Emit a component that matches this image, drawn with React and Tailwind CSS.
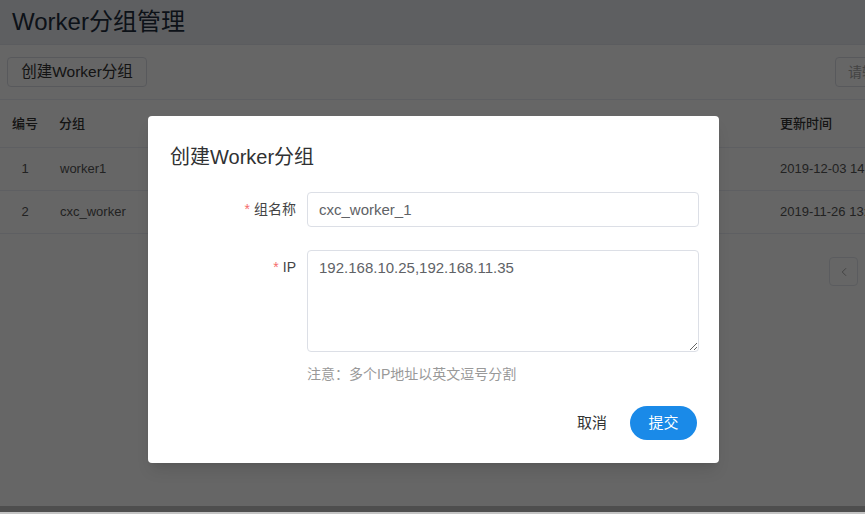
import { ChevronLeft } from 'lucide-react';

const rows = [
  { id: 1, name: 'worker1', time: '2019-12-03 14:21:35' },
  { id: 2, name: 'cxc_worker', time: '2019-11-26 13:40:12' },
];

function Page() {
  return (
    <div className="flex flex-col">
      {/* Seitenkopf */}
      <header className="h-[45px] bg-[#eceef3] border-b border-[#e4e7ed] px-3 flex items-center">
        <h1 className="text-[24px] leading-none text-[#1f2d3d]">Worker分组管理</h1>
      </header>

      {/* Werkzeugleiste */}
      <div className="h-[55px] bg-white border-b border-[#ebeef5] flex items-center justify-between pl-[7px]">
        <button className="h-[30px] w-[140px] rounded border border-[#dcdfe6] bg-white text-[15.5px] text-[#333]">
          创建Worker分组
        </button>
        <input
          readOnly
          placeholder="请输入分组名称"
          className="h-[30px] w-[200px] mr-[-170px] rounded border border-[#dcdfe6] px-3 text-[14px] placeholder:text-[#aaa]"
        />
      </div>

      {/* Tabelle */}
      <div className="bg-white">
        <div className="h-[48px] flex items-center border-b border-[#ebeef5] text-[13px] font-medium text-[#333]">
          <div className="w-[50px] shrink-0 text-center">编号</div>
          <div className="w-[721px] shrink-0 pl-[9px]">分组</div>
          <div className="shrink-0 pl-[9px]">更新时间</div>
        </div>
        {rows.map((r) => (
          <div key={r.id} className="h-[43px] flex items-center border-b border-[#ebeef5] text-[13px] text-[#555]">
            <div className="w-[50px] shrink-0 text-center">{r.id}</div>
            <div className="w-[721px] shrink-0 pl-[10px]">{r.name}</div>
            <div className="shrink-0 pl-[9px] whitespace-nowrap">{r.time}</div>
          </div>
        ))}
        <div className="flex justify-end pr-[7px] pt-[23px] pb-[220px]">
          <button className="w-[29px] h-[29px] border border-[#e4e7ed] rounded-sm flex items-center justify-center text-[#999]">
            <ChevronLeft size={14} strokeWidth={1.5} />
          </button>
        </div>
      </div>
    </div>
  );
}

export default function App() {
  return (
    <div className="relative h-[514px] w-[865px] overflow-hidden bg-[#c4c4c4] font-['Liberation_Sans','Noto_Sans_CJK_SC',sans-serif]">
      <div className="h-[512px] overflow-hidden">
        <Page />
      </div>

      {/* Overlay */}
      <div className="absolute inset-x-0 top-0 h-[512px] bg-black/60" />

      {/* Dialog */}
      <div className="absolute left-[148px] top-[116px] w-[571px] h-[347px] bg-white rounded shadow-lg pt-[29px] pl-[22px] pr-[20px]">
        <h2 className="text-[20px] leading-6 text-[#303133]">创建Worker分组</h2>

        <div className="mt-[23px] flex">
          <label className="w-[137px] pr-[11px] h-[35px] flex items-center justify-end text-[14px] text-[#444]">
            <span className="text-[#f56c6c] mr-1">*</span>组名称
          </label>
          <input
            readOnly
            defaultValue="cxc_worker_1"
            className="flex-1 h-[35px] rounded border border-[#dcdfe6] px-[11px] text-[15px] text-[#606266] outline-none"
          />
        </div>

        <div className="mt-[23px] flex">
          <label className="w-[137px] pr-[11px] h-[35px] flex items-center justify-end text-[14px] text-[#444]">
            <span className="text-[#f56c6c] mr-1">*</span>IP
          </label>
          <textarea
            readOnly
            defaultValue="192.168.10.25,192.168.11.35"
            className="flex-1 h-[102px] rounded border border-[#dcdfe6] px-[11px] pt-[7px] text-[15px] leading-5 text-[#606266] outline-none"
          />
        </div>

        <p className="ml-[137px] mt-[12px] text-[14px] leading-5 text-[#999]">注意：多个IP地址以英文逗号分割</p>

        <div className="mt-[22px] flex justify-end items-center gap-[23px] pr-[2px]">
          <button className="text-[15px] text-[#333]">取消</button>
          <button className="w-[67px] h-[34px] rounded-full bg-[#1a8ae8] text-white text-[15px]">提交</button>
        </div>
      </div>
    </div>
  );
}
